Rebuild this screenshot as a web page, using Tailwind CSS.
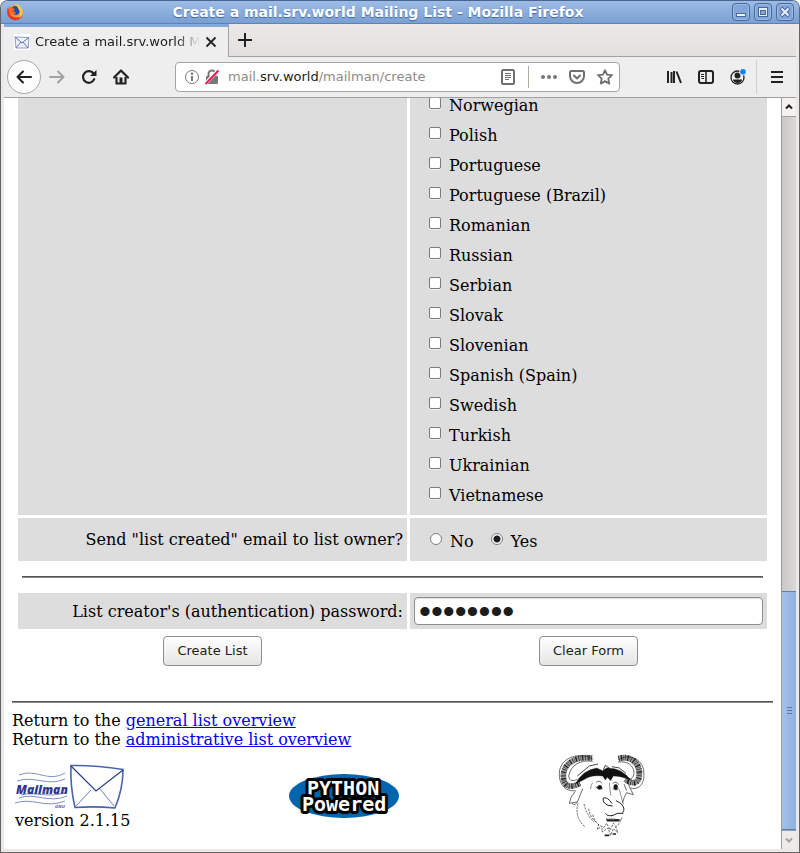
<!DOCTYPE html>
<html lang="en">
<head>
<meta charset="utf-8">
<title>Create a mail.srv.world Mailing List</title>
<script src="https://cdn.jsdelivr.net/npm/@tailwindcss/browser@4"></script>
</head>
<body class="bg-white">
<div class="flex h-screen flex-col overflow-hidden rounded-t-lg border border-[#666564] border-t-[#46658f] bg-[#ebe9e7] font-['DejaVu_Sans',sans-serif] text-[13px] text-[#1c1c1c]">

  <header class="flex h-[23px] shrink-0 items-center border-b border-[#5c82b8] bg-linear-to-b from-[#9dbbe5] to-[#7a9fd2] pl-[5px] pr-[5px]">
    <svg class="size-[18px]" viewBox="0 0 18 18" aria-hidden="true">
      <circle cx="9" cy="9.500" r="7.500" fill="#ff9a1f"/>
      <path d="M2 4C0 9 1 15 7 17c6 1 9-2 9.500-6C14 14 11 15 8 14 4 13 3 9 4 6L2.500 6z" fill="#e8372c"/>
      <circle cx="9.500" cy="7.500" r="4.500" fill="#1d4fa8"/>
      <path d="M8 1c5 0 9 4 8.500 8.500 0 3-2 5-4 5.500C15 11 14 5 8 1z" fill="#ffcb2f"/>
      <path d="M3 3.500l3 1.500 3 1-2 2 3 2c-1 2-4 2-5 1-2-2-3-5-2-7.500z" fill="#ff6a1f"/>
    </svg>
    <h1 class="flex-1 truncate text-center text-sm font-bold text-white [text-shadow:0_1px_1px_#3f639b]">Create a mail.srv.world Mailing List - Mozilla Firefox</h1>
    <div class="flex gap-1">
      <button aria-label="Minimize" class="size-[18px] rounded border border-[#47699c] bg-[#83a6d8] shadow-[inset_0_0_0_1px_#9cbae4]">
        <svg class="size-4" viewBox="0 0 16 16"><rect x="3.500" y="9.500" width="9" height="3" fill="#eef3fa" stroke="#47699c"/></svg>
      </button>
      <button aria-label="Maximize" class="size-[18px] rounded border border-[#47699c] bg-[#83a6d8] shadow-[inset_0_0_0_1px_#9cbae4]">
        <svg class="size-4" viewBox="0 0 16 16" stroke="#47699c"><rect x="3.500" y="3.500" width="9" height="9" fill="#e4ecf8"/><rect x="5.500" y="6.500" width="5" height="4" fill="#83a6d8"/></svg>
      </button>
      <button aria-label="Close" class="size-[18px] rounded border border-[#47699c] bg-[#83a6d8] shadow-[inset_0_0_0_1px_#9cbae4]">
        <svg class="size-4" viewBox="0 0 16 16"><path d="M4 4l8 8m0-8l-8 8" stroke="#47699c" stroke-width="4"/><path d="M4.500 4.500l7 7m0-7l-7 7" stroke="#e4ecf8" stroke-width="2.200"/></svg>
      </button>
    </div>
  </header>

  <div class="mx-[3px] mb-[3px] flex min-h-0 flex-1 flex-col">
    <div class="flex h-[33px] shrink-0">
      <div class="flex w-[225px] items-center border-r border-t-3 border-r-[#a3a3a2] border-t-[#86a9dc] bg-[#eee] pl-[10px]">
        <svg class="mr-[5px] h-4 w-4 bg-white" viewBox="0 0 16 16" fill="none" aria-hidden="true"><path d="M1 3l14 .5-.8 10.500L2 14z" fill="#eef2fb" stroke="#8f9bc8"/><path d="M1 3l7 6 7-5.500M2 14l5-6m7 6L9 8" stroke="#6371ab"/></svg>
        <span class="w-[165px] overflow-hidden whitespace-nowrap mask-r-from-85% mask-r-to-100%">Create a mail.srv.world Mailing List</span>
        <button aria-label="Close tab" class="ml-[5px]"><svg class="size-3" viewBox="0 0 12 12"><path d="M1.500 1.500l9 9m0-9l-9 9" stroke="#222" stroke-width="1.800"/></svg></button>
      </div>
      <div class="flex flex-1 items-center border-b border-[#a3a3a2] bg-linear-to-b from-[#ebe9e7] to-[#e2e1df] pl-2">
        <button aria-label="New tab"><svg class="size-4" viewBox="0 0 16 16"><path d="M8 1v14M1 8h14" stroke="#222" stroke-width="2"/></svg></button>
      </div>
    </div>

    <nav aria-label="Navigation" class="flex h-[41px] shrink-0 items-center border-b border-[#a0a09f] bg-[#eee] pl-[3px] pr-3">
      <button aria-label="Back" class="flex size-[34px] items-center justify-center rounded-full border border-[#a9a9a8] bg-[#fcfcfc]">
        <svg class="size-4" viewBox="0 0 16 16" fill="none" stroke="#222" stroke-width="2" stroke-linecap="round" stroke-linejoin="round"><path d="M15 8H1.500M7 2.500L1.500 8 7 13.500"/></svg>
      </button>
      <button aria-label="Forward" class="ml-2"><svg class="size-4" viewBox="0 0 16 16" fill="none" stroke="#a3a3a3" stroke-width="2" stroke-linecap="round" stroke-linejoin="round"><path d="M1 8h13.500M9 2.500L14.500 8 9 13.500"/></svg></button>
      <button aria-label="Reload" class="ml-4"><svg class="size-4" viewBox="0 0 16 16" fill="none"><path d="M13.200 10.200A5.800 5.800 0 1 1 12.500 4.500" stroke="#222" stroke-width="2.200" stroke-linecap="round"/><path d="M15.500 1v6h-6.500z" fill="#222"/></svg></button>
      <button aria-label="Home" class="ml-4"><svg class="size-4" viewBox="0 0 16 16" fill="none"><path d="M1 8.500L8 1.500l7 7" stroke="#222" stroke-width="2.200" stroke-linecap="round" stroke-linejoin="round"/><path d="M3.500 8v6.500h9V8" stroke="#222" stroke-width="2.200" stroke-linejoin="round"/><rect x="6.500" y="8.500" width="3" height="6" fill="#222"/></svg></button>

      <div class="ml-[46px] mr-[46px] flex h-[30px] min-w-0 flex-1 items-center rounded border border-[#a6a5a3] bg-white pr-[6px] pl-2">
        <button aria-label="Site information"><svg class="size-4" viewBox="0 0 16 16" fill="none"><circle cx="8" cy="8" r="6.500" stroke="#777"/><path d="M8 7v5" stroke="#777" stroke-width="2"/><circle cx="8" cy="4.800" r="1.200" fill="#777"/></svg></button>
        <button aria-label="Connection is not secure" class="ml-1"><svg class="size-4" viewBox="0 0 16 16" fill="none"><path d="M4.500 8V5a3.500 3.500 0 0 1 7 0v3" stroke="#777" stroke-width="2"/><rect x="2" y="7" width="12" height="8" rx="1" fill="#777"/><path d="M1 15L14.500 1" stroke="#fff" stroke-width="3.400"/><path d="M1.500 15L14.500 1.500" stroke="#f0184f" stroke-width="2"/></svg></button>
        <div role="textbox" aria-label="Address" contenteditable="true" class="ml-2 flex-1 truncate text-[#8b8b8b]">mail.<span class="text-[#1c1c1c]">srv.world</span>/mailman/create</div>
        <button aria-label="Reader view"><svg class="size-4" viewBox="0 0 16 16" fill="none" stroke="#6f6f6f"><rect x="2" y="1" width="12" height="14" rx="1.500" stroke-width="2"/><path d="M5 4.500h6M5 6.500h6M5 8.500h6M5 10.500h4"/></svg></button>
        <span class="ml-3 mr-3 h-[22px] w-px bg-[#b3aca2]"></span>
        <button aria-label="Page actions"><svg class="size-4" viewBox="0 0 16 16" fill="#777"><circle cx="2" cy="8" r="2"/><circle cx="8" cy="8" r="2"/><circle cx="14" cy="8" r="2"/></svg></button>
        <button aria-label="Save to Pocket" class="ml-3"><svg class="size-4" viewBox="0 0 16 16" fill="none" stroke="#6f6f6f" stroke-width="2" stroke-linecap="round" stroke-linejoin="round"><path d="M2.500 2h11A1.500 1.500 0 0 1 15 3.500V7a7 7 0 0 1-14 0V3.500A1.500 1.500 0 0 1 2.500 2z"/><path d="M5 6.500l3 3 3-3"/></svg></button>
        <button aria-label="Bookmark this page" class="ml-3"><svg class="size-4" viewBox="0 0 16 16" fill="none" stroke="#6f6f6f" stroke-width="1.800" stroke-linejoin="round"><path d="M8 1.200l2 4.500 5 .5-3.700 3.400 1 5L8 12.100l-4.300 2.500 1-5L1 6.200l5-.5z"/></svg></button>
      </div>

      <button aria-label="Library"><svg class="size-4" viewBox="0 0 16 16" stroke="#222" stroke-width="2"><path d="M2 2v12M5.500 3v11M8 2v12M10.500 2.500l4.500 11.500"/></svg></button>
      <button aria-label="Sidebars" class="ml-4"><svg class="size-4" viewBox="0 0 16 16" fill="none" stroke="#222"><rect x="1" y="2" width="14" height="12" rx="2" stroke-width="2"/><path d="M8 2v12" stroke-width="1.500"/><path d="M3 5.500h3M3 7.500h3M3.500 9.500H6"/></svg></button>
      <button aria-label="Account" class="ml-4"><svg class="size-4" viewBox="0 0 16 16" fill="none"><circle cx="7.500" cy="8.500" r="6.500" stroke="#222" stroke-width="1.300"/><circle cx="7.500" cy="6.500" r="3" fill="#222"/><path d="M3 10.500h9c0 2-2 3.500-4.500 3.500S3 12.500 3 10.500z" fill="#222"/><circle cx="13" cy="2.800" r="3.800" fill="#eee"/><circle cx="13" cy="2.800" r="2.800" fill="#0a84ff"/></svg></button>
      <span class="ml-[10px] h-[34px] w-px bg-[#cfcfcf]"></span>
      <button aria-label="Open menu" class="ml-[13px]"><svg class="h-4 w-[14px]" viewBox="0 0 14 16"><path d="M1 3h12M1 8h12M1 13h12" stroke="#222" stroke-width="2"/></svg></button>
    </nav>

    <div class="flex min-h-0 flex-1 bg-white">
      <main id="page" class="min-w-0 flex-1 overflow-hidden px-2 font-['DejaVu_Serif',serif] text-base leading-[19px] text-black">
        <form class="-mt-[7px] px-[6px]">
          <div class="grid grid-cols-[389fr_357fr] gap-[3px]">
            <div class="bg-[#ddd]"></div>
            <fieldset class="bg-[#ddd] pb-1 pl-[19px] leading-[30px]" aria-label="Initial list of supported languages">
              <label class="flex gap-2"><input type="checkbox" class="mt-[6px] size-3 appearance-none rounded-xs border border-[#7d7b77] bg-white shadow-[0_1px_0_#f0f0f0]">Norwegian</label>
              <label class="flex gap-2"><input type="checkbox" class="mt-[6px] size-3 appearance-none rounded-xs border border-[#7d7b77] bg-white shadow-[0_1px_0_#f0f0f0]">Polish</label>
              <label class="flex gap-2"><input type="checkbox" class="mt-[6px] size-3 appearance-none rounded-xs border border-[#7d7b77] bg-white shadow-[0_1px_0_#f0f0f0]">Portuguese</label>
              <label class="flex gap-2"><input type="checkbox" class="mt-[6px] size-3 appearance-none rounded-xs border border-[#7d7b77] bg-white shadow-[0_1px_0_#f0f0f0]">Portuguese (Brazil)</label>
              <label class="flex gap-2"><input type="checkbox" class="mt-[6px] size-3 appearance-none rounded-xs border border-[#7d7b77] bg-white shadow-[0_1px_0_#f0f0f0]">Romanian</label>
              <label class="flex gap-2"><input type="checkbox" class="mt-[6px] size-3 appearance-none rounded-xs border border-[#7d7b77] bg-white shadow-[0_1px_0_#f0f0f0]">Russian</label>
              <label class="flex gap-2"><input type="checkbox" class="mt-[6px] size-3 appearance-none rounded-xs border border-[#7d7b77] bg-white shadow-[0_1px_0_#f0f0f0]">Serbian</label>
              <label class="flex gap-2"><input type="checkbox" class="mt-[6px] size-3 appearance-none rounded-xs border border-[#7d7b77] bg-white shadow-[0_1px_0_#f0f0f0]">Slovak</label>
              <label class="flex gap-2"><input type="checkbox" class="mt-[6px] size-3 appearance-none rounded-xs border border-[#7d7b77] bg-white shadow-[0_1px_0_#f0f0f0]">Slovenian</label>
              <label class="flex gap-2"><input type="checkbox" class="mt-[6px] size-3 appearance-none rounded-xs border border-[#7d7b77] bg-white shadow-[0_1px_0_#f0f0f0]">Spanish (Spain)</label>
              <label class="flex gap-2"><input type="checkbox" class="mt-[6px] size-3 appearance-none rounded-xs border border-[#7d7b77] bg-white shadow-[0_1px_0_#f0f0f0]">Swedish</label>
              <label class="flex gap-2"><input type="checkbox" class="mt-[6px] size-3 appearance-none rounded-xs border border-[#7d7b77] bg-white shadow-[0_1px_0_#f0f0f0]">Turkish</label>
              <label class="flex gap-2"><input type="checkbox" class="mt-[6px] size-3 appearance-none rounded-xs border border-[#7d7b77] bg-white shadow-[0_1px_0_#f0f0f0]">Ukrainian</label>
              <label class="flex gap-2"><input type="checkbox" class="mt-[6px] size-3 appearance-none rounded-xs border border-[#7d7b77] bg-white shadow-[0_1px_0_#f0f0f0]">Vietnamese</label>
            </fieldset>

            <div id="notify-label" class="flex items-center justify-end bg-[#ddd] pr-1">Send "list created" email to list owner?</div>
            <div role="radiogroup" aria-labelledby="notify-label" class="flex gap-[17px] bg-[#ddd] pt-[9px] pb-1 pl-5 leading-[30px]">
              <label class="flex gap-2"><input type="radio" name="notify" class="mt-[6px] size-3 appearance-none rounded-full border border-[#7d7b77] bg-white">No</label>
              <label class="flex gap-2"><input type="radio" name="notify" checked class="mt-[6px] size-3 appearance-none rounded-full border border-[#7d7b77] bg-white bg-[radial-gradient(circle,#1c1c1c_3px,#fff_4px)]">Yes</label>
            </div>

            <hr class="col-span-2 mx-1 my-3 h-[2px] border-t border-[#555] bg-[#888]">

            <label for="auth" class="flex items-center justify-end bg-[#ddd] pr-1">List creator's (authentication) password:</label>
            <div class="bg-[#ddd] p-1">
              <input id="auth" type="password" value="password" class="block h-7 w-full rounded border border-[#8f8e8c] bg-white px-1 font-['Liberation_Sans'] text-[34px] leading-[26px] text-[#1c1c1c] shadow-[inset_0_1px_1px_#ddd]">
            </div>

            <div class="pt-1 text-center"><button type="button" class="h-[30px] rounded-sm border border-[#8f8e8c] bg-linear-to-b from-white to-[#e6e5e4] px-[13px] pb-[2px] font-['DejaVu_Sans'] text-[13px] text-[#1c1c1c]">Create List</button></div>
            <div class="pt-1 text-center"><button type="reset" class="h-[30px] rounded-sm border border-[#8f8e8c] bg-linear-to-b from-white to-[#e6e5e4] px-[13px] pb-[2px] font-['DejaVu_Sans'] text-[13px] text-[#1c1c1c]">Clear Form</button></div>
          </div>
        </form>

        <hr class="mt-[35px] mb-2 h-[2px] border-t border-[#555] bg-[#888]">
        <p>Return to the <a href="#" class="text-[#0000ee] underline">general list overview</a></p>
        <p>Return to the <a href="#" class="text-[#0000ee] underline">administrative list overview</a></p>

        <footer class="mt-[5px] grid grid-cols-[274fr_269fr_212fr] items-center px-[3px]">
          <div>
            <svg class="h-12 w-[110px]" viewBox="0 0 110 46" fill="none" role="img" aria-label="Mailman">
              <g stroke="#7f8ec4" stroke-width="1"><path d="M4 11c18-7 28 8 46-2M2 17c18-6 30 6 48-2"/><path d="M4 34c16-6 30 6 48-2M0 39c18-6 30 6 50-2M6 31c14-4 28 4 46-3"/></g>
              <text x="1" y="30" font-family="Open Sans" font-size="12" font-weight="800" font-style="italic" fill="#2b3a8c">Mailman</text>
              <text x="40" y="44" font-family="DejaVu Sans" font-size="4" font-weight="700" font-style="italic" fill="#6b5bc0">GNU</text>
              <path d="M56 1.500Q80 1 108 5.500Q108 25 100 44Q80 42 60 43.500Q55 22 56 1.500z" stroke="#4a63ae" stroke-width="1.600"/>
              <path d="M56 2L81 27 108 6" stroke="#2b3f92" stroke-width="1.300"/><path d="M61 42l15-16M99 42L85 25" stroke="#6c80bd"/>
            </svg>
            <p>version 2.1.15</p>
          </div>
          <svg class="h-[44px] w-[110px]" viewBox="0 0 110 44" role="img" aria-label="Python Powered">
            <ellipse cx="55" cy="22" rx="55" ry="22" fill="#0065ad"/>
            <g font-family="DejaVu Sans Mono" font-size="20" font-weight="700" stroke="#000" stroke-width="6" stroke-linejoin="round" fill="#fff" paint-order="stroke">
              <text x="18" y="21">PYTHON</text>
              <text x="13" y="37">Powered</text>
            </g>
          </svg>
          <svg class="h-[84px] w-[87px]" viewBox="24 18 261 252" fill="none" stroke="#222" role="img" aria-label="GNU">
            <path d="M126 30C80 24 42 44 40 82c0 30 16 42 50 24M206 32c30-10 60 8 62 42 0 32-16 38-42 20" stroke="#999" stroke-width="17"/>
            <path d="M126 30C80 24 42 44 40 82c0 30 16 42 50 24" stroke-width="16" stroke-dasharray="2 5 4 3 1 4"/>
            <path d="M206 32c30-10 60 8 62 42 0 32-16 38-42 20" stroke-width="18" stroke-dasharray="2 5 4 3 1 4"/>
            <path d="M130 34C100 14 40 20 29 66c-6 38 14 66 48 62M128 40C90 34 62 52 56 84c2 16 14 16 26 10" stroke-width="2"/>
            <path d="M204 36c24-18 66-10 76 26 8 40-10 66-38 58M204 42c30-4 48 12 48 34-2 16-12 20-24 14" stroke-width="2"/>
            <path d="M76 108Q98 66 140 60L158 68 170 60Q214 58 242 96Q212 84 190 84L182 98 172 88 166 96 158 84Q122 80 104 94z" fill="#111" stroke-width="1"/>
            <path d="M82 84l36-30 26-6M160 66l6-14 14 10M186 56l22 4 20 16" stroke-width="2.500"/>
            <path d="M76 130Q60 146 58 166l22-4M66 166Q76 176 84 158L98 122M232 96q4 20 18 44l-20-6q-8 12-12 30M222 108l8 20" stroke-width="2"/>
            <path d="M138 104q10-10 18 2M188 106q10-8 18 4M136 116q8 12 22 6M188 122q12 8 18 0" stroke-width="2"/>
            <ellipse cx="149" cy="118" rx="7" ry="6" fill="#111"/><ellipse cx="197" cy="117" rx="6" ry="8" fill="#111"/>
            <path d="M128 104q-6 8-6 20M178 104l4 38M208 124l12 46" stroke-width="1.500"/>
            <path d="M160 150q12-4 26 16M160 150q-4 14 14 22l14 2M198 158l14 8q16 16 6 28M184 204q20-12 36-8M166 196q6 10 22 6M168 214q22-2 44 2" stroke-width="3"/>
            <path d="M170 218h38" stroke-width="5"/>
            <path d="M84 166q-12 40 22 72M102 168q8 34 30 54M116 182q4 26 22 40M128 200q8 26 24 34M146 228l-4 16 14-10 0 18 18-12 8 22 8-20 14 12-10-24M160 240l10-14 10 20 12-22M216 208q-6 20-20 30" stroke-width="2" stroke-dasharray="7 3"/>
            <path d="M164 262h14M188 258h10" stroke-width="5"/>
          </svg>
        </footer>
      </main>

      <div role="scrollbar" aria-label="Page" aria-controls="page" aria-valuenow="100" class="flex w-[15px] shrink-0 flex-col border-l border-[#9c9b99] bg-linear-to-r from-[#cac8c6] to-[#dad9d7]">
        <button aria-label="Scroll up" class="flex h-[19px] items-center justify-center border-b border-[#a09f9d] bg-[#f3f2f1]"><svg class="size-2" viewBox="0 0 8 8" fill="none"><path d="M1 5.500l3-3 3 3" stroke="#222" stroke-width="2"/></svg></button>
        <div class="grow-[475] basis-0"></div>
        <div class="flex grow-[237] basis-0 flex-col items-center justify-center gap-[2px] border-y border-[#5680ba] bg-linear-to-r from-[#a3c1ea] to-[#8eb1e0]">
          <span class="h-px w-[5px] bg-[#5877a5]"></span><span class="h-px w-[5px] bg-[#5877a5]"></span><span class="h-px w-[5px] bg-[#5877a5]"></span>
        </div>
        <button aria-label="Scroll down" class="flex h-[19px] items-center justify-center border-t border-[#a09f9d] bg-[#ecebea]"><svg class="size-2" viewBox="0 0 8 8" fill="none"><path d="M1 2.500l3 3 3-3" stroke="#a5a4a2" stroke-width="2"/></svg></button>
      </div>
    </div>
  </div>
</div>
</body>
</html>
